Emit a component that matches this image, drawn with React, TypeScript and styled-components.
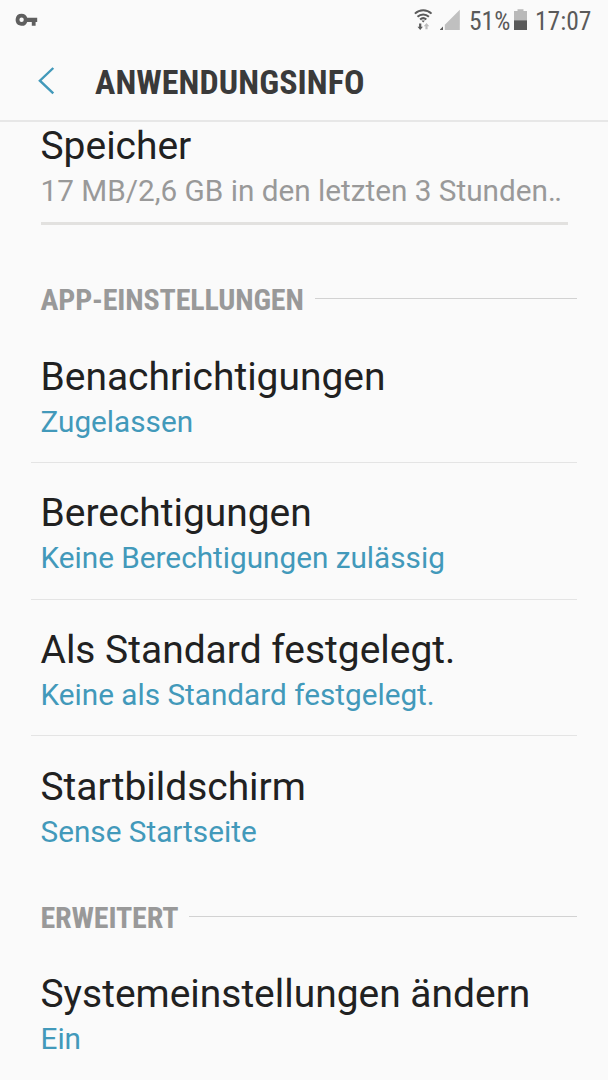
import React from "react";
import styled, { createGlobalStyle } from "styled-components";

const Global = createGlobalStyle`
  * { box-sizing: border-box; }
  body { margin: 0; background: #fafafa; }
`;
const Screen = styled.main`
  width: 608px;
  height: 1080px;
  overflow: hidden;
  background: #fafafa;
  font-family: Roboto, sans-serif;
  color: #212121;
  display: flex;
  flex-direction: column;
`;
const StatusBar = styled.div`
  height: 42px;
  flex: none;
  display: flex;
  align-items: flex-start;
  justify-content: space-between;
  padding: 0 17px 0 15px;
  color: #5a5a5a;
`;
const StatusRight = styled.div`
  display: flex;
  align-items: flex-start;
`;
const StatusText = styled.span<{ $w: number }>`
  width: ${(p) => p.$w}px;
  font-size: 25.5px;
  font-stretch: 75%;
  line-height: 42px;
  white-space: nowrap;
`;
const Glyph = styled.svg`
  display: block;
  flex: none;
`;
const Header = styled.header`
  height: 80px;
  flex: none;
  display: flex;
  align-items: center;
  padding-left: 38px;
  border-bottom: 2px solid #e7e7e7;
`;
const Title = styled.h1`
  margin: 2px 0 0 40px;
  font-stretch: 75%;
  font-size: 34px;
  line-height: 40px;
  letter-spacing: 0.08px;
  font-weight: 700;
  color: #3a3a3a;
  white-space: nowrap;
`;
const Row = styled.section<{ $line?: boolean }>`
  height: 136.7px;
  flex: none;
  margin: 0 31px;
  padding: 27.5px 9.5px 0;
  border-bottom: ${(p) => (p.$line ? "1px solid #e4e4e4" : "none")};
`;
const MemoryRow = styled.section`
  height: 133.2px;
  flex: none;
  padding: 1px 40.5px 0;
`;
const Name = styled.div`
  font-size: 38.95px;
  line-height: 46px;
  white-space: nowrap;
`;
const Detail = styled.div<{ $muted?: boolean }>`
  font-size: 29.72px;
  line-height: 36px;
  margin-top: 4px;
  white-space: nowrap;
  color: ${(p) => (p.$muted ? "#999" : "#4299ba")};
`;
const Dots = styled.span`
  letter-spacing: -1.6px;
`;
const MemoryBar = styled.div`
  width: 527px;
  height: 3px;
  margin-top: 13px;
  background: #e2e1df;
`;
const SectionHead = styled.div`
  height: 71px;
  flex: none;
  display: flex;
  padding: 0 31px 0 40.5px;
`;
const SectionTitle = styled.h2`
  margin: 27px 11px 0 0;
  font-stretch: 75%;
  font-size: 30px;
  line-height: 36px;
  letter-spacing: -0.15px;
  font-weight: 700;
  color: #999;
  white-space: nowrap;
`;
const SectionLine = styled.div`
  flex: 1;
  height: 1px;
  margin-top: 43px;
  background: #d2d2d2;
`;

const KeyIcon = () => (
  <Glyph width="24" height="34" viewBox="0 0 24 34">
    <path fill="#5f5f5f" fillRule="evenodd" d="M6.6 13.7a6 6 0 1 0 5.6 8.2h4.6v3.8h3.8v-3.8h1.6v-4.2h-10a6 6 0 0 0-5.6-4zm0 3.9a2.2 2.2 0 1 1 0 4.4a2.2 2.2 0 0 1 0-4.4z" />
  </Glyph>
);

const WifiIcon = () => (
  <Glyph width="26" height="34" viewBox="0 0 26 34">
    <g fill="none" stroke="#5a5a5a" strokeWidth="2">
      <path d="M.9 13.6C5.7 9 12.7 9 17.5 13.6" />
      <path d="M3.5 16.7c3.3-3.1 8.1-3.1 11.4 0" />
      <path d="M6.1 19.6c1.8-1.7 4.4-1.7 6.2 0" />
    </g>
    <path fill="#5a5a5a" d="M7.4 20.4h3.6l-1.8 2zM5.1 23.6h2.2v3.2h1.6l-2.7 3.2-2.7-3.2h1.6z" />
    <path fill="#bcbcbc" d="M12.5 23l2.8 3.2h-1.7v3h-2.2v-3H9.7z" />
  </Glyph>
);

const SignalIcon = () => (
  <Glyph width="29" height="34" viewBox="0 0 29 34">
    <path fill="#c0c0c0" d="M19.8 9.7V30H4.8v-5.2z" />
    <path fill="#5a5a5a" d="M3 26.4V30H-.4z" />
  </Glyph>
);

const BatteryIcon = () => (
  <Glyph width="21" height="34" viewBox="0 0 21 34">
    <path fill="#b9b9b9" d="M0 11h3.5V9.2h6V11H13v9.5H0z" />
    <path fill="#5a5a5a" d="M0 20.3h13V30H0z" />
  </Glyph>
);

const BackIcon = () => (
  <Glyph width="17" height="28" viewBox="0 0 17 28">
    <path fill="none" stroke="#4299ba" strokeWidth="2.4" d="M15.3 1L1.9 13.7L15.3 26.4" />
  </Glyph>
);

const Item = ({ name, detail, line }: { name: string; detail: string; line?: boolean }) => (
  <Row $line={line}>
    <Name>{name}</Name>
    <Detail>{detail}</Detail>
  </Row>
);

const Section = ({ title }: { title: string }) => (
  <SectionHead>
    <SectionTitle>{title}</SectionTitle>
    <SectionLine />
  </SectionHead>
);

export default function App() {
  return (
    <Screen>
      <Global />
      <StatusBar>
        <KeyIcon />
        <StatusRight>
          <WifiIcon />
          <SignalIcon />
          <StatusText $w={45}>51%</StatusText>
          <BatteryIcon />
          <StatusText $w={56}>17:07</StatusText>
        </StatusRight>
      </StatusBar>
      <Header>
        <BackIcon />
        <Title>ANWENDUNGSINFO</Title>
      </Header>
      <MemoryRow>
        <Name>Speicher</Name>
        <Detail $muted>17 MB/2,6 GB in den letzten 3 Stunden<Dots>..</Dots></Detail>
        <MemoryBar />
      </MemoryRow>
      <Section title="APP-EINSTELLUNGEN" />
      <Item name="Benachrichtigungen" detail="Zugelassen" line />
      <Item name="Berechtigungen" detail="Keine Berechtigungen zulässig" line />
      <Item name="Als Standard festgelegt." detail="Keine als Standard festgelegt." line />
      <Item name="Startbildschirm" detail="Sense Startseite" />
      <Section title="ERWEITERT" />
      <Item name="Systemeinstellungen ändern" detail="Ein" />
    </Screen>
  );
}
